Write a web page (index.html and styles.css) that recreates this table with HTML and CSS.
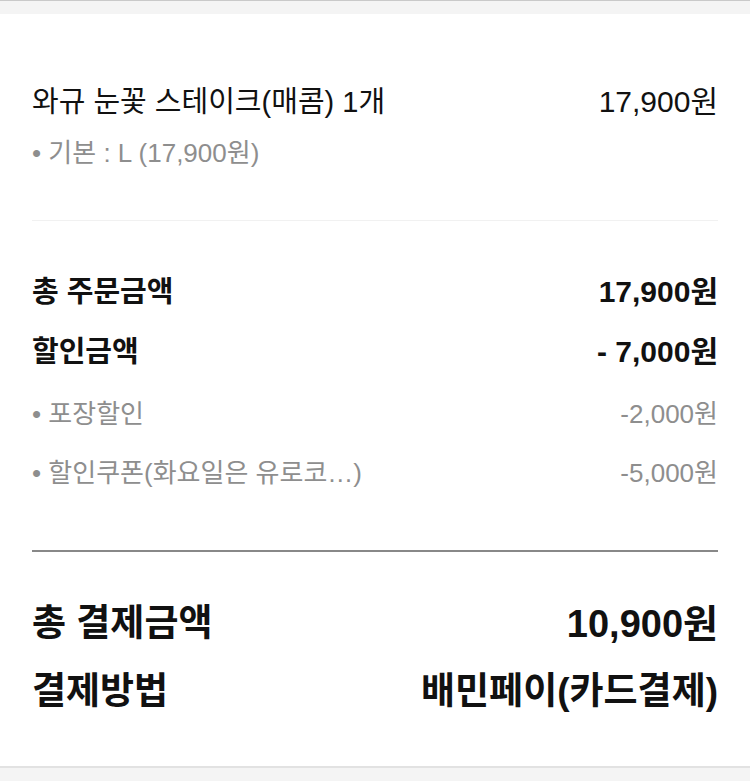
FILE: index.html
```html
<!DOCTYPE html>
<html lang="ko">
<head>
<meta charset="utf-8">
<link rel="stylesheet" href="styles.css">
</head>
<body>
<div class="page">
  <div class="card">
    <section class="sec sec-item">
      <div class="row row-item">
        <span class="label">와규 눈꽃 스테이크(매콤) 1개</span>
        <span class="value">17,900원</span>
      </div>
      <div class="row row-sub first-sub">
        <span class="label">• 기본 : L (17,900원)</span>
      </div>
    </section>
    <div class="divider light"></div>
    <section class="sec sec-order">
      <div class="row row-bold">
        <span class="label">총 주문금액</span>
        <span class="value">17,900원</span>
      </div>
      <div class="row row-bold">
        <span class="label">할인금액</span>
        <span class="value">- 7,000원</span>
      </div>
      <div class="row row-sub">
        <span class="label">• 포장할인</span>
        <span class="value">-2,000원</span>
      </div>
      <div class="row row-sub">
        <span class="label">• 할인쿠폰(화요일은 유로코…)</span>
        <span class="value">-5,000원</span>
      </div>
    </section>
    <div class="divider dark"></div>
    <section class="sec sec-pay">
      <div class="row row-big">
        <span class="label">총 결제금액</span>
        <span class="value amount">10,900원</span>
      </div>
      <div class="row row-big">
        <span class="label">결제방법</span>
        <span class="value">배민페이(카드결제)</span>
      </div>
    </section>
  </div>
</div>
</body>
</html>
```

FILE: styles.css
```css
* { box-sizing: border-box; }
html, body { margin: 0; padding: 0; }
body {
  background: #f4f4f4;
  font-family: "Liberation Sans", "Noto Sans CJK KR", sans-serif;
  color: #222;
}
.page {
  border-top: 1px solid #c9c9c9;
  padding-top: 13px;
}
.card {
  background: #fff;
  border-bottom: 2px solid #e2e2e2;
  padding: 0 32px;
}
.sec { display: flex; flex-direction: column; }
.row {
  display: flex;
  justify-content: space-between;
  align-items: center;
}
.sec-item { padding: 70px 0 50px; }
.row-item { font-size: 29px; line-height: 36px; color: #111; }
.row-item .value { font-size: 30px; }
.row-sub { font-size: 26px; line-height: 34px; color: #8e8e8e; margin-top: 25px; }
.first-sub { margin-top: 16px; }
.divider { height: 1px; }
.divider.light { background: #f1f1f1; }
.divider.dark { background: #888; height: 2px; }
.sec-order { padding: 53px 0 60px; }
.row-bold { font-size: 29px; line-height: 36px; font-weight: 700; color: #111; }
.row-bold .value { font-size: 30px; }
.row-bold + .row-bold { margin-top: 24px; }
.row-bold + .row-sub { margin-top: 27px; }
.sec-pay { padding: 50px 0 52px; }
.row-big { font-size: 37px; line-height: 44px; font-weight: 700; color: #111; }
.row-big .amount { font-size: 38px; }
.row-big + .row-big { margin-top: 24px; }
```
